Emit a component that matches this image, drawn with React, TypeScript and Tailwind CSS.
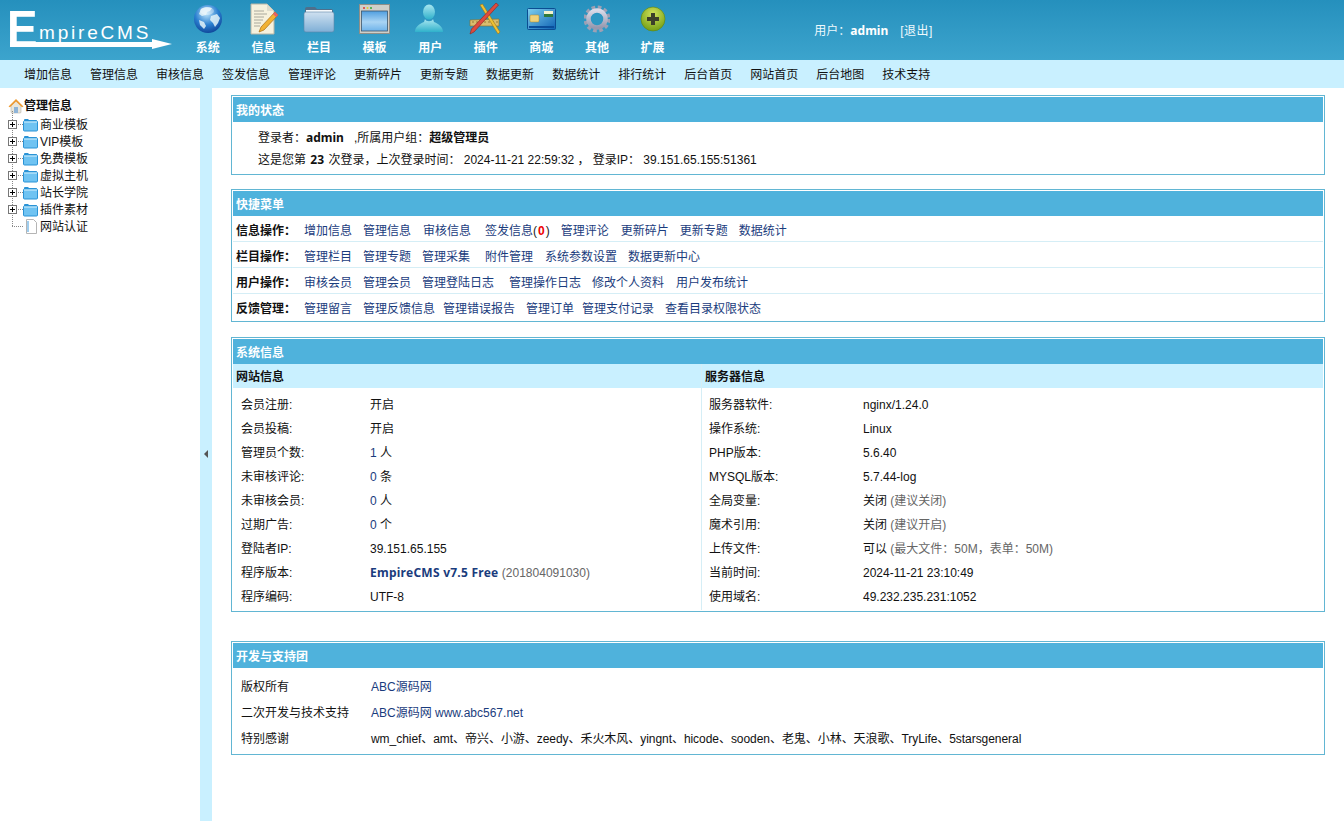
import type { ReactNode } from "react";

const NAV = ["增加信息", "管理信息", "审核信息", "签发信息", "管理评论", "更新碎片", "更新专题", "数据更新", "数据统计", "排行统计", "后台首页", "网站首页", "后台地图", "技术支持"];
const TREE = ["商业模板", "VIP模板", "免费模板", "虚拟主机", "站长学院", "插件素材"];

function GlobeIcon() {
  return (
    <svg width="32" height="32" viewBox="0 0 32 32">
      <defs>
        <radialGradient id="gl" cx="45%" cy="30%" r="75%">
          <stop offset="0%" stopColor="#bfe6fb" />
          <stop offset="55%" stopColor="#2a7fd0" />
          <stop offset="100%" stopColor="#0c3f93" />
        </radialGradient>
      </defs>
      <circle cx="16" cy="16" r="14" fill="url(#gl)" />
      <path d="M9 6c3-2 8-2 11-1l-2 3-3 1-1 3-4 1-3-2zM19 13l6-2 3 4-2 5-3 4-2-4-3-3zM7 17l5 2 2 4-2 3-4-4z" fill="#e4f3f8" opacity=".85" />
      <ellipse cx="15" cy="8" rx="7" ry="4" fill="#fff" opacity=".35" />
    </svg>
  );
}

function DocIcon() {
  return (
    <svg width="32" height="32" viewBox="0 0 32 32">
      <path d="M4 1h16l7 7v23H4z" fill="#f6f1dd" stroke="#b9b6a5" />
      <path d="M20 1v7h7z" fill="#dedccd" />
      <path d="M7 8h10M7 11h13M7 14h10M7 17h9M7 20h7M7 23h6" stroke="#a9a89c" strokeWidth="1" />
      <path d="M28 9l3 3-14 15-5 2 2-5z" fill="#f2b233" stroke="#a86b12" strokeWidth=".7" />
      <path d="M28 9l3 3-2 2-3-3z" fill="#e3606a" />
    </svg>
  );
}

function FolderIcon() {
  return (
    <svg width="32" height="30" viewBox="0 0 32 30">
      <defs>
        <linearGradient id="fd" x1="0" y1="0" x2="0" y2="1">
          <stop offset="0%" stopColor="#cfe1f0" />
          <stop offset="100%" stopColor="#7fafd6" />
        </linearGradient>
      </defs>
      <path d="M2 5q0-2 2-2h8l2 2h14q2 0 2 2v2H2z" fill="#4f6f8b" />
      <path d="M3 6h26v2H3z" fill="#f4f8fb" />
      <rect x="1" y="8" width="30" height="20" rx="2" fill="url(#fd)" stroke="#5f87a8" strokeWidth=".6" />
    </svg>
  );
}

function WindowIcon() {
  return (
    <svg width="31" height="30" viewBox="0 0 31 30">
      <defs>
        <linearGradient id="wn" x1="0" y1="0" x2="0" y2="1">
          <stop offset="0%" stopColor="#4f9ee0" />
          <stop offset="55%" stopColor="#a9d4f4" />
          <stop offset="100%" stopColor="#6eb3ea" />
        </linearGradient>
      </defs>
      <rect x=".5" y=".5" width="30" height="29" fill="#cfcfc9" stroke="#8f8f88" />
      <circle cx="5" cy="4" r="1" fill="#d33" />
      <circle cx="8.5" cy="4" r="1" fill="#dc3" />
      <circle cx="12" cy="4" r="1" fill="#3a3" />
      <rect x="2.5" y="7" width="26" height="20" fill="url(#wn)" stroke="#3d566b" strokeWidth=".8" />
    </svg>
  );
}

function UserIcon() {
  return (
    <svg width="32" height="32" viewBox="0 0 32 32">
      <defs>
        <linearGradient id="us" x1="0" y1="0" x2="0" y2="1">
          <stop offset="0%" stopColor="#a8e6f0" />
          <stop offset="100%" stopColor="#2fb1cb" />
        </linearGradient>
      </defs>
      <ellipse cx="15" cy="9" rx="6" ry="7.5" fill="url(#us)" />
      <path d="M11 16c1 3 7 3 8 0l1 3c5 2 9 5 9 10H1c0-5 4-8 9-10z" fill="url(#us)" />
    </svg>
  );
}

function ToolsIcon() {
  return (
    <svg width="33" height="33" viewBox="0 0 33 33">
      <path d="M1 18l29-1v7H1z" fill="#d8bd6e" stroke="#8a6b22" strokeWidth=".6" />
      <path d="M4 19v2M8 19v2M12 19v2M16 19v2M20 19v2M24 19v2M28 19v2" stroke="#7b5f1c" strokeWidth=".7" />
      <path d="M11 3l2.500-1L31 30l-2 2z" fill="#f0c234" stroke="#9a7714" strokeWidth=".6" />
      <path d="M27 1l2.500 2L5 30l-4 2 1.500-5z" fill="#dc4b3f" stroke="#8b241c" strokeWidth=".6" />
    </svg>
  );
}

function CardIcon() {
  return (
    <svg width="29" height="22" viewBox="0 0 29 22">
      <defs>
        <linearGradient id="cd" x1="0" y1="0" x2="1" y2="1">
          <stop offset="0%" stopColor="#7fd0ef" />
          <stop offset="100%" stopColor="#0d62b4" />
        </linearGradient>
      </defs>
      <rect x=".5" y=".5" width="28" height="21" rx="1" fill="url(#cd)" stroke="#0b4d92" />
      <rect x="3" y="7" width="9" height="7" rx="1" fill="#f0d27a" stroke="#a8852c" strokeWidth=".5" />
      <rect x="17" y="3" width="9" height="3" fill="#f2f2d0" />
      <rect x="17" y="6" width="9" height="3" fill="#2f7a3c" />
      <path d="M2 19h25" stroke="#0a4e9a" strokeWidth="2" />
    </svg>
  );
}

function GearIcon() {
  return (
    <svg width="26" height="28" viewBox="0 0 26 28">
      <defs>
        <linearGradient id="gr" x1="0" y1="0" x2="0" y2="1">
          <stop offset="0%" stopColor="#d9dae8" />
          <stop offset="100%" stopColor="#9698ae" />
        </linearGradient>
      </defs>
      <circle cx="13" cy="14" r="11" fill="none" stroke="#9ea0b4" strokeWidth="5" strokeDasharray="3.4 2.4" />
      <circle cx="13" cy="14" r="8.5" fill="none" stroke="url(#gr)" strokeWidth="4.5" />
      <circle cx="13" cy="14" r="5.5" fill="#2e97c2" />
    </svg>
  );
}

function PlusIcon() {
  return (
    <svg width="26" height="28" viewBox="0 0 26 28">
      <defs>
        <radialGradient id="pl" cx="50%" cy="30%" r="75%">
          <stop offset="0%" stopColor="#d2e35c" />
          <stop offset="100%" stopColor="#6d9a10" />
        </radialGradient>
      </defs>
      <circle cx="13" cy="14" r="12" fill="url(#pl)" stroke="#5d8410" strokeWidth=".6" />
      <path d="M11 8h4v4h4v4h-4v4h-4v-4H7v-4h4z" fill="#3c3f2a" />
    </svg>
  );
}

const MENU: { label: string; icon: ReactNode }[] = [
  { label: "系统", icon: <GlobeIcon /> },
  { label: "信息", icon: <DocIcon /> },
  { label: "栏目", icon: <FolderIcon /> },
  { label: "模板", icon: <WindowIcon /> },
  { label: "用户", icon: <UserIcon /> },
  { label: "插件", icon: <ToolsIcon /> },
  { label: "商城", icon: <CardIcon /> },
  { label: "其他", icon: <GearIcon /> },
  { label: "扩展", icon: <PlusIcon /> },
];

function Logo() {
  return (
    <svg width="172" height="60" viewBox="0 0 172 60" className="shrink-0">
      <text x="0" y="47" transform="translate(7 0) scale(0.88 1)" fill="#fff" fontFamily="Liberation Sans" fontWeight="700" fontSize="52">E</text>
      <text x="39" y="39" fill="#fff" fontFamily="Liberation Sans" fontSize="19" letterSpacing="2.8">mpireCMS</text>
      <path d="M10 42h142v-3l20 5-20 5v-2H10z" fill="#fff" />
    </svg>
  );
}

function SmallFolder() {
  return (
    <svg width="15" height="14" viewBox="0 0 15 14" className="shrink-0">
      <path d="M1 3V2q0-1 1-1h3l1 1h7q1 0 1 1v1H1z" fill="#2a93d6" />
      <rect x=".5" y="3" width="14" height="10" rx="1" fill="#6fc3f2" stroke="#2a93d6" />
      <path d="M1 4h13" stroke="#d8f2fd" />
    </svg>
  );
}

function HomeIcon() {
  return (
    <svg width="16" height="16" viewBox="0 0 16 16" className="shrink-0">
      <path d="M3 8v6q0 1 1 1h8q1 0 1-1V8L8 3z" fill="#e9e6dc" stroke="#a9a69b" strokeWidth=".5" />
      <path d="M.5 8.5L8 1l7.5 7.500-1.500.7L8 3.500 2 9.200z" fill="#ee9a32" />
      <rect x="6" y="9" width="4" height="6" fill="#8fb4d8" />
    </svg>
  );
}

function TreeRow({ label, last }: { label: string; last?: boolean }) {
  return (
    <div className="relative flex h-[17px] items-center">
      <span className="absolute left-[12px] top-[-5px] h-[13px] border-l border-dotted border-[#888]" />
      {!last && <span className="absolute left-[12px] top-[8px] h-[9px] border-l border-dotted border-[#888]" />}
      <span className="absolute left-[12px] top-[8px] w-[11px] border-t border-dotted border-[#888]" />
      {last ? (
        <svg width="13" height="15" viewBox="0 0 13 15" className="relative ml-[25px] shrink-0">
          <path d="M1.500.5h7l3 3v11h-10z" fill="#fff" stroke="#b5b5b5" />
          <path d="M3 2v11" stroke="#9fcdee" strokeWidth="2" />
        </svg>
      ) : (
        <>
          <span className="relative ml-[8px] flex h-[9px] w-[9px] shrink-0 items-center justify-center border border-[#777] bg-white">
            <span className="absolute h-px w-[5px] bg-black" />
            <span className="absolute h-[5px] w-px bg-black" />
          </span>
          <span className="relative ml-[6px]"><SmallFolder /></span>
        </>
      )}
      <span className="ml-[2px]">{label}</span>
    </div>
  );
}

function Panel({ title, className, children }: { title: string; className?: string; children: ReactNode }) {
  return (
    <section className={`border border-[#62b6d3] p-px ${className ?? ""}`}>
      <h2 className="flex h-[25px] items-center bg-[#4fb2dc] px-[3px] pt-[3px] text-[12px] font-bold text-white">{title}</h2>
      {children}
    </section>
  );
}

const QUICK: { label: string; links: [string, string][] }[] = [
  { label: "信息操作：", links: [["增加信息", ""], ["管理信息", "ml-[11px]"], ["审核信息", "ml-[12px]"], ["签发信息", "ml-[14px]"], ["管理评论", "ml-[11px]"], ["更新碎片", "ml-[12px]"], ["更新专题", "ml-[11px]"], ["数据统计", "ml-[11px]"]] },
  { label: "栏目操作：", links: [["管理栏目", ""], ["管理专题", "ml-[11px]"], ["管理采集", "ml-[11px]"], ["附件管理", "ml-[15px]"], ["系统参数设置", "ml-[12px]"], ["数据更新中心", "ml-[11px]"]] },
  { label: "用户操作：", links: [["审核会员", ""], ["管理会员", "ml-[11px]"], ["管理登陆日志", "ml-[11px]"], ["管理操作日志", "ml-[15px]"], ["修改个人资料", "ml-[11px]"], ["用户发布统计", "ml-[12px]"]] },
  { label: "反馈管理：", links: [["管理留言", ""], ["管理反馈信息", "ml-[11px]"], ["管理错误报告", "ml-[8px]"], ["管理订单", "ml-[11px]"], ["管理支付记录", "ml-[8px]"], ["查看目录权限状态", "ml-[11px]"]] },
];

const SITE: [string, ReactNode][] = [
  ["会员注册:", "开启"],
  ["会员投稿:", "开启"],
  ["管理员个数:", <><span className="text-[#1a3c7d]">1</span> 人</>],
  ["未审核评论:", <><span className="text-[#1a3c7d]">0</span> 条</>],
  ["未审核会员:", <><span className="text-[#1a3c7d]">0</span> 人</>],
  ["过期广告:", <><span className="text-[#1a3c7d]">0</span> 个</>],
  ["登陆者IP:", "39.151.65.155"],
  ["程序版本:", <><b className="font-['Noto_Sans'] tracking-[0.25px] text-[#1a3c7d]">EmpireCMS v7.5 Free</b> <span className="text-[#666]">(201804091030)</span></>],
  ["程序编码:", "UTF-8"],
];

const SERVER: [string, ReactNode][] = [
  ["服务器软件:", "nginx/1.24.0"],
  ["操作系统:", "Linux"],
  ["PHP版本:", "5.6.40"],
  ["MYSQL版本:", "5.7.44-log"],
  ["全局变量:", <>关闭 <span className="text-[#666]">(建议关闭)</span></>],
  ["魔术引用:", <>关闭 <span className="text-[#666]">(建议开启)</span></>],
  ["上传文件:", <>可以 <span className="text-[#666]">(最大文件：50M，表单：50M)</span></>],
  ["当前时间:", "2024-11-21 23:10:49"],
  ["使用域名:", "49.232.235.231:1052"],
];

function InfoRows({ rows, className, labelWidth }: { rows: [string, ReactNode][]; className: string; labelWidth: string }) {
  return (
    <div className={`pb-[2px] pt-[4px] ${className}`}>
      {rows.map(([k, v]) => (
        <div key={k} className="flex h-[24px] items-center pt-[2px]">
          <span className={`shrink-0 ${labelWidth}`}>{k}</span>
          <span>{v}</span>
        </div>
      ))}
    </div>
  );
}

export default function App() {
  return (
    <div className="flex h-[821px] flex-col overflow-hidden bg-white text-[12px] text-[#111]" style={{ fontFamily: '"Liberation Sans", "Noto Sans CJK SC", sans-serif' }}>
      <header className="flex h-[60px] items-center bg-gradient-to-b from-[#2590bd] to-[#3ca4cd]">
        <Logo />
        <nav className="ml-[8px] flex h-full">
          {MENU.map((m) => (
            <div key={m.label} className="flex w-[55.6px] flex-col items-center justify-end pb-[3px]">
              <div className="flex h-[37px] items-center justify-center">{m.icon}</div>
              <span className="mt-[2px] font-bold text-white">{m.label}</span>
            </div>
          ))}
        </nav>
        <div className="ml-[134px] flex items-center pt-[1px] text-[#eef9fd]">
          用户：<b className="font-['Noto_Sans'] text-white">admin</b><span className="ml-[12px] tracking-[0.5px]">[退出]</span>
        </div>
      </header>
      <div className="flex h-[28px] items-center gap-[18px] bg-[#c9f0ff] pl-[24px] pt-[2px]">
        {NAV.map((n) => <span key={n}>{n}</span>)}
      </div>
      <div className="flex min-h-0 flex-1">
        <aside className="w-[200px] shrink-0 pt-[8px]">
          <div className="flex h-[20px] items-center pl-[8px] font-bold"><HomeIcon />管理信息</div>
          {TREE.map((t) => <TreeRow key={t} label={t} />)}
          <TreeRow label="网站认证" last />
        </aside>
        <div className="relative flex w-[12px] shrink-0 items-center justify-center bg-[#c9f0ff]">
          <span className="mb-[2px] h-0 w-0 border-y-[4px] border-r-[4px] border-y-transparent border-r-[#555]" />
        </div>
        <main className="min-w-0 flex-1 pl-[19px] pr-[19px] pt-[7px]">
          <Panel title="我的状态">
            <div className="h-[51px] pl-[25px] pt-[5px]">
              <div className="flex h-[22px] items-center whitespace-pre">登录者：<b className="font-['Noto_Sans']">admin</b>   ,所属用户组：<b>超级管理员</b></div>
              <div className="flex h-[22px] items-center whitespace-pre">这是您第 <b className="px-px font-['Noto_Sans']">23</b> 次登录，上次登录时间： 2024-11-21 22:59:32 ，<span className="ml-[3px]">登录IP： 39.151.65.155:51361</span></div>
            </div>
          </Panel>
          <Panel title="快捷菜单" className="mt-[14px]">
            {QUICK.map((r, i) => (
              <div key={r.label} className={`flex h-[26px] items-center px-[3px] ${i < 3 ? "border-b border-[#d5eef6] pt-[5px]" : "pt-[3px]"}`}>
                <b className="w-[68px] shrink-0">{r.label}</b>
                {r.links.map(([t, ml]) => (
                  <span key={t} className={`text-[#1a3c7d] ${ml}`}>
                    {t === "签发信息" ? <>签发信息<span className="text-[#222]">(</span><b className="px-[1px] text-[#e00]">0</b><span className="text-[#222]">)</span></> : t}
                  </span>
                ))}
              </div>
            ))}
          </Panel>
          <Panel title="系统信息" className="mt-[15px]">
            <div className="grid grid-cols-[469px_1fr]">
              <div className="border-r border-[#d5eef6]">
                <div className="flex h-[24px] items-center bg-[#c9f0ff] px-[3px] pt-[2px] font-bold">网站信息</div>
                <InfoRows rows={SITE} className="pl-[8px]" labelWidth="w-[129px]" />
              </div>
              <div>
                <div className="flex h-[24px] items-center bg-[#c9f0ff] px-[3px] pt-[2px] font-bold">服务器信息</div>
                <InfoRows rows={SERVER} className="pl-[7px]" labelWidth="w-[154px]" />
              </div>
            </div>
          </Panel>
          <Panel title="开发与支持团" className="mt-[29px]">
            <div className="pb-[2px] pl-[8px] pt-[5px]">
              <div className="flex h-[26px] items-center pt-[2px]"><span className="w-[130px]">版权所有</span><span className="text-[#1a3c7d]">ABC源码网</span></div>
              <div className="flex h-[26px] items-center pt-[2px]"><span className="w-[130px]">二次开发与技术支持</span><span className="text-[#1a3c7d]">ABC源码网 www.abc567.net</span></div>
              <div className="flex h-[26px] items-center pt-[2px]"><span className="w-[130px]">特别感谢</span><span className="tracking-[-0.05px]">wm_chief、amt、帝兴、小游、zeedy、禾火木风、yingnt、hicode、sooden、老鬼、小林、天浪歌、TryLife、5starsgeneral</span></div>
            </div>
          </Panel>
        </main>
      </div>
    </div>
  );
}
